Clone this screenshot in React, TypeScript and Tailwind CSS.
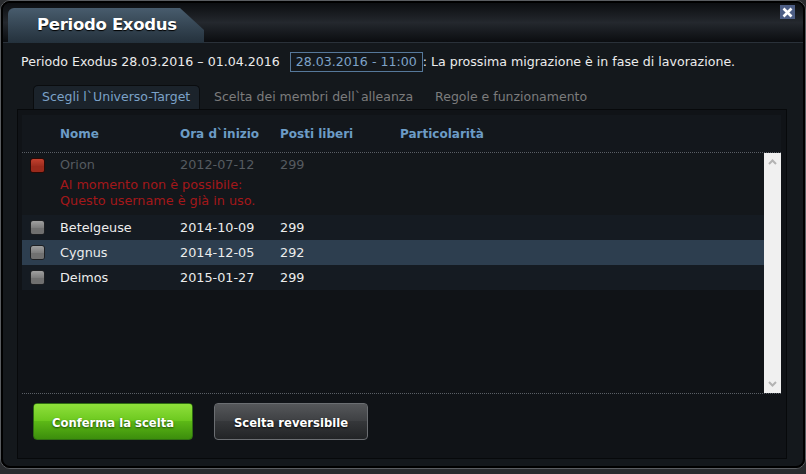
import React from 'react';

const rows = [
    { name: 'Betelgeuse', date: '2014-10-09', free: '299', active: false },
    { name: 'Cygnus', date: '2014-12-05', free: '292', active: true },
    { name: 'Deimos', date: '2015-01-27', free: '299', active: false },
];

const Check = ({ red = false }: { red?: boolean }) => (
    <div
        className={`relative w-[15px] h-[15px] rounded-[3px] border overflow-hidden ${
            red
                ? 'border-[#2a0905] bg-gradient-to-b from-[#c4402e] to-[#7e1d12]'
                : 'border-[#1d1f22] bg-gradient-to-b from-[#a0a0a0] to-[#5e5e5e]'
        }`}
    >
        <div className={`absolute left-0 right-0 top-[7px] h-[6px] ${red ? 'bg-[#9a2a1c]' : 'bg-[#707070]'}`} />
    </div>
);

const Chevron = ({ down = false }: { down?: boolean }) => (
    <svg width="9" height="6" viewBox="0 0 9 6" className={down ? 'rotate-180' : ''}>
        <path d="M1 5 L4.5 1.5 L8 5" stroke="#b3b3b3" strokeWidth="2" fill="none" />
    </svg>
);

export default function App() {
    return (
        <div className="w-[806px] h-[474px] overflow-hidden bg-[#2a2c2f] font-['DejaVu_Sans',Verdana,sans-serif]">
            <div className="w-[806px] h-[469px] rounded-[10px] border border-[#5a5d61] bg-black">
                <div className="h-full rounded-[9px] border-2 border-black bg-[#14181c] flex flex-col overflow-hidden">
                    {/* Header */}
                    <div className="relative h-[40px] shrink-0 bg-gradient-to-b from-[#0c0e11] via-[#24282e] to-[#0b0d10] border-b border-[#2a3139]">
                        <div className="ml-[5px] mt-[5px] w-[196px] h-[35px] bg-gradient-to-b from-[#485c6d] to-[#24313c] [clip-path:polygon(0_0,172px_0,196px_22px,196px_100%,0_100%)] rounded-tl-[6px] flex items-center pl-[29px]">
                            <span className="text-white font-bold text-[16.5px] tracking-[-0.3px] [text-shadow:0_1px_1px_#000]">Periodo Exodus</span>
                        </div>
                        <div className="absolute right-[8px] top-[2px] w-[15px] h-[14px] bg-[#4d5e85] flex items-center justify-center">
                            <svg width="11" height="11" viewBox="0 0 11 11">
                                <path d="M1.5 1.5 L9.5 9.5 M9.5 1.5 L1.5 9.5" stroke="#fff" strokeWidth="2.6" />
                            </svg>
                        </div>
                    </div>

                    {/* Body */}
                    <div className="flex-1 flex flex-col">
                        <div className="pl-[18px] pt-[9px] flex items-center h-[29px] text-[12.6px] text-[#ececec]">
                            <span>Periodo Exodus 28.03.2016 – 01.04.2016</span>
                            <span className="ml-[10px] h-[20px] px-[5px] border border-[#56789a] text-[#7ea3c8] flex items-center">28.03.2016 - 11:00</span>
                            <span>: La prossima migrazione è in fase di lavorazione.</span>
                        </div>

                        {/* Tabs */}
                        <div className="mt-[13px] ml-[30px] flex items-end h-[24px] text-[12.5px]">
                            <div className="h-[24px] w-[167px] rounded-t-[5px] border border-b-0 border-[#0a0c0e] bg-[#1b232b] text-[#7ba2c8] flex items-center pl-[8px]">
                                Scegli l`Universo-Target
                            </div>
                            <div className="h-[24px] flex items-center ml-[14px] text-[#7c7c7c]">Scelta dei membri dell`alleanza</div>
                            <div className="h-[24px] flex items-center ml-[22px] text-[#7c7c7c]">Regole e funzionamento</div>
                        </div>

                        {/* Panel */}
                        <div className="ml-[14px] w-[770px] h-[350px] border border-[#07090b] bg-[#101317] pl-[4px] pr-[5px] pt-[5px] flex flex-col">
                            <div className="grid grid-cols-[38px_120px_100px_120px_1fr] items-center h-[37px] bg-[#13171c] text-[12px] font-bold text-[#6c9cc6]">
                                <div />
                                <div>Nome</div>
                                <div>Ora d`inizio</div>
                                <div>Posti liberi</div>
                                <div>Particolarità</div>
                            </div>
                            <div className="border-t border-dotted border-[#5a5f66]" />
                            <div className="flex h-[240px]">
                                <div className="flex-1 text-[12.8px]">
                                    <div className="bg-[#13171b] pb-[6px]">
                                        <div className="grid grid-cols-[38px_120px_100px_120px_1fr] items-center h-[24px] text-[#565b60]">
                                            <div className="pl-[8px]"><Check red /></div>
                                            <div>Orion</div>
                                            <div>2012-07-12</div>
                                            <div>299</div>
                                            <div />
                                        </div>
                                        <div className="pl-[38px] text-[#a3171a] leading-[16px]">
                                            <div>Al momento non è possibile:</div>
                                            <div>Questo username è già in uso.</div>
                                        </div>
                                    </div>
                                    {rows.map((r) => (
                                        <div
                                            key={r.name}
                                            className={`grid grid-cols-[38px_120px_100px_120px_1fr] items-center h-[25px] text-[#ececec] ${
                                                r.active ? 'bg-[#2d3e4f]' : 'bg-[#151b22]'
                                            }`}
                                        >
                                            <div className="pl-[8px]"><Check /></div>
                                            <div>{r.name}</div>
                                            <div>{r.date}</div>
                                            <div>{r.free}</div>
                                            <div />
                                        </div>
                                    ))}
                                </div>
                                <div className="w-[17px] bg-[#f0f0f0] flex flex-col items-center justify-between py-[6px]">
                                    <Chevron />
                                    <Chevron down />
                                </div>
                            </div>
                            <div className="border-t border-dotted border-[#5a5f66]" />
                            <div className="flex gap-[21px] pl-[11px] pt-[9px]">
                                <button className="relative w-[160px] h-[37px] rounded-[4px] border border-[#2f6d12] bg-gradient-to-b from-[#8bdc2c] via-[#5cb816] to-[#3c8e0c] overflow-hidden">
                                    <div className="absolute inset-x-0 top-0 h-[17px] bg-gradient-to-b from-[#8fe03a] to-[#6cc81e]" />
                                    <span className="relative text-white font-bold text-[11.6px] [text-shadow:0_1px_2px_#1c4a06]">Conferma la scelta</span>
                                </button>
                                <button className="relative w-[154px] h-[37px] rounded-[4px] border border-[#6b6e72] bg-gradient-to-b from-[#4d4f52] via-[#35373a] to-[#222426] overflow-hidden">
                                    <div className="absolute inset-x-0 top-0 h-[17px] bg-gradient-to-b from-[#55575a] to-[#3e4043]" />
                                    <span className="relative text-white font-bold text-[11.6px] [text-shadow:0_1px_2px_#000]">Scelta reversibile</span>
                                </button>
                            </div>
                        </div>
                    </div>
                </div>
            </div>
        </div>
    );
}
